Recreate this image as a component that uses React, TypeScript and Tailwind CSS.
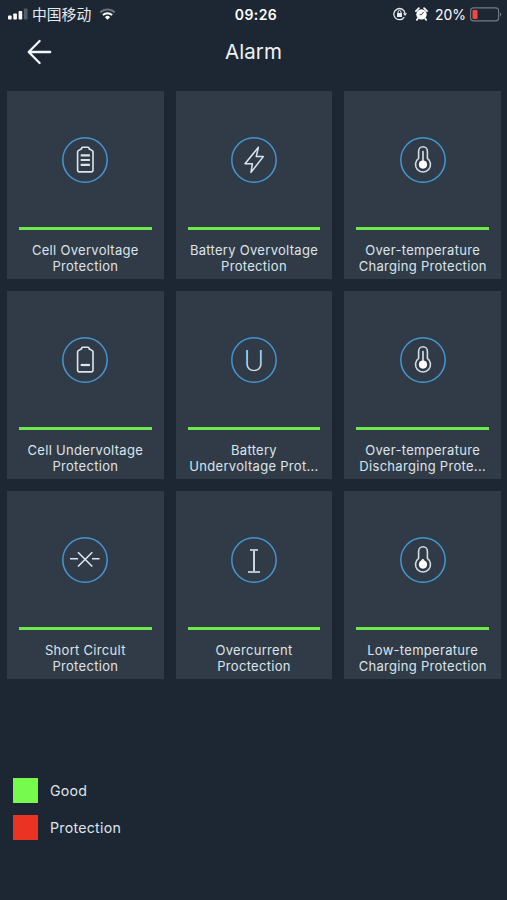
import type { ReactNode } from "react";

const batteryOutline = "M16.3 9.2h5.4a1 1 0 0 1 1 1v.5l2.9 1.7a1.7 1.7 0 0 1 1.1 1.5v18.4a1.6 1.6 0 0 1-1.6 1.6H12.9a1.6 1.6 0 0 1-1.6-1.6V13.9a1.7 1.7 0 0 1 1.1-1.5l2.9-1.7v-.5a1 1 0 0 1 1-1z";

function BatteryFull() {
  return (
    <svg width="44" height="44" viewBox="-3.3 0 44 44" fill="none" stroke="#DCE5EE" strokeWidth="1.6" strokeLinejoin="round">
      <path d={batteryOutline} />
      <path d="M14.4 17.3h9.2M14.4 22h9.2M14.4 26.8h9.2" strokeWidth="2.2" />
    </svg>
  );
}

function BatteryLow() {
  return (
    <svg width="44" height="44" viewBox="-3.3 0 44 44" fill="none" stroke="#DCE5EE" strokeWidth="1.6" strokeLinejoin="round">
      <path d={batteryOutline} />
      <path d="M14.4 27h9.2" strokeWidth="2.2" />
    </svg>
  );
}

function Bolt() {
  return (
    <svg width="44" height="44" viewBox="0 0 44 44" fill="none" stroke="#DCE5EE" strokeWidth="1.5" strokeLinejoin="round">
      <path d="M26.4 9.3 13 25.7h7.4L19 34.4l12.3-15.8h-7.1z" />
    </svg>
  );
}

function Thermometer({ low = false }: { low?: boolean }) {
  return (
    <svg width="44" height="44" viewBox="0 0 44 44" fill="none" stroke="#D3DDE6" strokeWidth="1.6" strokeLinecap="round">
      <path d="M17.6 20.4V13.2a4.4 4.4 0 0 1 8.8 0v7.2a7.5 7.5 0 1 1-8.8 0z" strokeLinejoin="round" />
      {low ? (
        <path d="M22 21.3l2 2.8h-4z" fill="#FFFFFF" stroke="#FFFFFF" strokeWidth="1" />
      ) : (
        <path d="M22 13.5v10" strokeWidth="1.7" />
      )}
      <circle cx="22" cy="26.6" r="4.1" fill="#FFFFFF" stroke="none" />
    </svg>
  );
}

function ShortCircuit() {
  return (
    <svg width="44" height="44" viewBox="0 0 44 44" fill="none" stroke="#DCE5EE" strokeWidth="1.6">
      <path d="M7 20.8h8M29 20.8h7.5M15 14.3l14.3 14.2M29.3 14.3 15 28.5" />
    </svg>
  );
}

function Voltage() {
  return (
    <span className="pt-px font-[Inter,sans-serif] text-[28px] leading-none font-extralight text-[#DCE5EE]">U</span>
  );
}

function Current() {
  return (
    <span className="flex flex-col items-center pt-px">
      <span className="h-[2px] w-2 bg-[#B5C0CA]" />
      <span className="h-[20px] w-[2px] bg-[#CBD5DE]" />
      <span className="h-[2px] w-3 bg-[#B5C0CA]" />
    </span>
  );
}

const alarms: { lines: [string, string]; icon: ReactNode }[] = [
  { lines: ["Cell Overvoltage", "Protection"], icon: <BatteryFull /> },
  { lines: ["Battery Overvoltage", "Protection"], icon: <Bolt /> },
  { lines: ["Over-temperature", "Charging Protection"], icon: <Thermometer /> },
  { lines: ["Cell Undervoltage", "Protection"], icon: <BatteryLow /> },
  { lines: ["Battery", "Undervoltage Prot..."], icon: <Voltage /> },
  { lines: ["Over-temperature", "Discharging Prote..."], icon: <Thermometer /> },
  { lines: ["Short Circult", "Protection"], icon: <ShortCircuit /> },
  { lines: ["Overcurrent", "Proctection"], icon: <Current /> },
  { lines: ["Low-temperature", "Charging Protection"], icon: <Thermometer low /> },
];

const legend = [
  { label: "Good", color: "bg-[#76FA4C]" },
  { label: "Protection", color: "bg-[#EB3323]" },
];

function StatusBar() {
  return (
    <div className="grid h-7 grid-cols-[1fr_auto_1fr] items-center pr-[5px] pl-2 text-white">
      <div className="flex items-center">
        <svg width="20" height="12" viewBox="0 0 20 12" fill="#FFFFFF">
          <rect x="0" y="7.5" width="3.6" height="4" rx="0.8" />
          <rect x="5.3" y="5.5" width="3.6" height="6" rx="0.8" />
          <rect x="10.6" y="3" width="3.6" height="8.5" rx="0.8" />
          <rect x="15.9" y="0.5" width="3.6" height="11" rx="0.8" opacity="0.25" />
        </svg>
        <span className="ml-1 font-['Noto_Sans_CJK_SC',sans-serif] text-[14.8px] leading-5 text-[#E6EBF0]">中国移动</span>
        <svg className="ml-2" width="17" height="12" viewBox="0 0 18 13" fill="none" stroke="#FFFFFF" strokeWidth="2.2">
          <path d="M1.2 4.8a11 11 0 0 1 15.6 0" opacity="0.35" />
          <path d="M4 7.7a7 7 0 0 1 10 0" />
          <path d="M9 12.6 6.2 9.9a3.9 3.9 0 0 1 5.6 0z" fill="#FFFFFF" stroke="none" />
        </svg>
      </div>
      <span className="ml-[2px] text-[14px] font-semibold tracking-[0.4px]">09:26</span>
      <div className="flex items-center justify-end">
        <svg width="14" height="14" viewBox="0 0 14 14" fill="none" stroke="#E6EBF0" strokeWidth="1.3">
          <path d="M11.2 10.1A5.6 5.6 0 1 1 12 6.3" />
          <path d="M9.9 6.2h4.1l-2 2.7z" fill="#E6EBF0" stroke="none" />
          <rect x="4" y="6.1" width="5" height="3.8" rx="0.5" fill="#E6EBF0" stroke="none" />
          <path d="M5 6.3V5a1.5 1.5 0 0 1 3 0v1.3" strokeWidth="1" />
        </svg>
        <svg className="ml-[8px]" width="13" height="14" viewBox="0 0 13 14">
          <circle cx="6.5" cy="7.4" r="5.2" fill="#FFFFFF" />
          <path d="M0.9 4.2 3.9 1.2M12.1 4.2l-3-3M2.8 11.5l-1 1.4M10.2 11.5l1 1.4" stroke="#FFFFFF" strokeWidth="1.7" strokeLinecap="round" />
          <path d="M6.5 7.7 8.6 4.9M6.5 7.7H4.6" fill="none" stroke="#1E2633" strokeWidth="0.9" />
        </svg>
        <span className="ml-[7px] text-[14px]">20%</span>
        <svg className="ml-[4px]" width="32" height="15" viewBox="0 0 32 15" fill="none">
          <rect x="0.6" y="0.9" width="28" height="13" rx="3" stroke="#747B85" strokeWidth="1.1" />
          <rect x="2.5" y="3" width="5" height="9" rx="1" fill="#F0483A" />
          <path d="M30 5.3c1.6.8 1.6 3.6 0 4.4z" fill="#747B85" />
        </svg>
      </div>
    </div>
  );
}

export default function App() {
  return (
    <div className="flex h-[900px] w-[507px] flex-col overflow-hidden bg-[#1D2633] font-[Inter,sans-serif] text-[#DDE4EB]">
      <StatusBar />

      <header className="grid h-12 grid-cols-[1fr_auto_1fr] items-center">
        <svg className="ml-[27px]" width="25" height="26" viewBox="0 0 25 26" fill="none" stroke="#F0F5FA" strokeWidth="2.3" strokeLinecap="round" strokeLinejoin="round">
          <path d="M12.6 2 1.7 13l10.9 11M2 13h21.2" />
        </svg>
        <h1 className="text-[20.5px] tracking-[0.1px] text-[#EEF2F6]">Alarm</h1>
      </header>

      <main className="grid grid-cols-3 gap-3 pt-[15px] pr-[6px] pl-[7px]">
        {alarms.map((alarm, i) => (
          <div key={i} className="flex h-[188px] flex-col bg-[#303B47] px-3 pt-[46px]">
            <div className="relative flex size-[46px] items-center justify-center self-center">
              <svg className="absolute inset-0" width="46" height="46" viewBox="0 0 46 46" fill="none">
                <circle cx="23" cy="23" r="22.2" stroke="#4596CF" strokeWidth="1.5" />
              </svg>
              {alarm.icon}
            </div>
            <div className="mt-[44px] h-[3px] shrink-0 bg-[#6FE84C]" />
            <p className="mt-3 text-center text-[13px] leading-4 tracking-[0.3px] whitespace-nowrap">
              {alarm.lines[0]}
              <br />
              {alarm.lines[1]}
            </p>
          </div>
        ))}
      </main>

      <footer className="mt-[99px] flex flex-col gap-3 pl-[13px]">
        {legend.map((item) => (
          <div key={item.label} className="flex items-center gap-3">
            <span className={`size-[25px] ${item.color}`} />
            <span className="text-[14.2px] tracking-[0.25px]">{item.label}</span>
          </div>
        ))}
      </footer>
    </div>
  );
}
